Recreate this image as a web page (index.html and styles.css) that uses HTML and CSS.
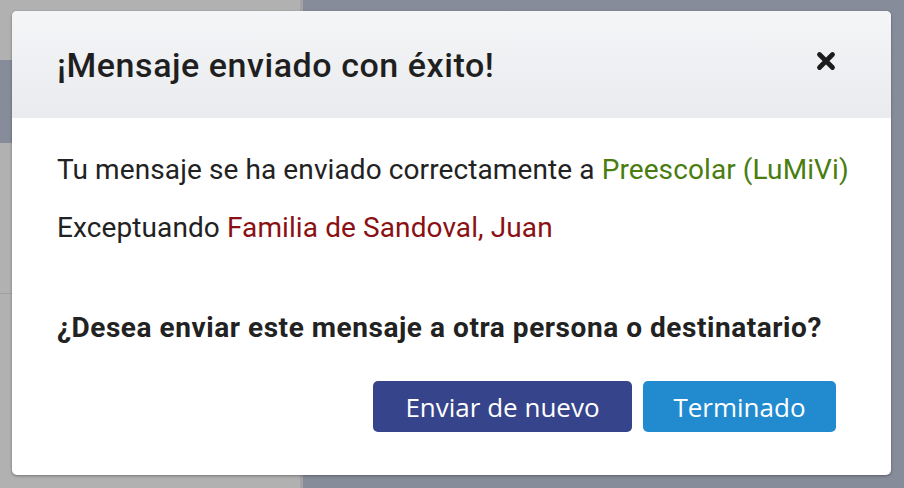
FILE: index.html
```html
<!DOCTYPE html>
<html lang="es">
<head>
<meta charset="utf-8">
<title>Mensaje enviado</title>
<link rel="stylesheet" href="styles.css">
</head>
<body>
<div class="app">
  <aside class="sidebar">
    <div class="side-top"></div>
    <div class="side-active"></div>
    <div class="side-rest"></div>
  </aside>
  <main class="main"></main>
</div>

<div class="modal">
  <header class="modal-header">
    <h1 class="modal-title">¡Mensaje enviado con éxito!</h1>
    <button class="close" aria-label="Cerrar">
      <svg width="20" height="20" viewBox="0 0 20 20"><path d="M3.5 3.5 L16.5 16.5 M16.5 3.5 L3.5 16.5" stroke="#1c1c1c" stroke-width="4.8" stroke-linecap="round"/></svg>
    </button>
  </header>
  <section class="modal-body">
    <p class="line">Tu mensaje se ha enviado correctamente a <span class="green">Preescolar (LuMiVi)</span></p>
    <p class="line">Exceptuando <span class="red">Familia de Sandoval, Juan</span></p>
    <p class="question">¿Desea enviar este mensaje a otra persona o destinatario?</p>
    <div class="actions">
      <button class="btn btn-primary">Enviar de nuevo</button>
      <button class="btn btn-info">Terminado</button>
    </div>
  </section>
</div>
</body>
</html>
```

FILE: styles.css
```css
html, body {
  margin: 0;
  padding: 0;
  width: 904px;
  height: 488px;
  overflow: hidden;
  font-family: Roboto, "Liberation Sans", sans-serif;
}

.app {
  display: flex;
  height: 488px;
}

.sidebar {
  width: 300px;
  background: #b1b1b1;
  border-right: 3px solid #a3a3a5;
  display: flex;
  flex-direction: column;
}

.side-top {
  height: 60px;
}

.side-active {
  height: 83px;
  background: #878c9a;
}

.side-rest {
  height: 150px;
  border-bottom: 1px solid #a0a0a0;
}

.main {
  flex: 1;
  background: #878c9b;
}

.modal {
  position: absolute;
  left: 12px;
  top: 11px;
  width: 879px;
  height: 464px;
  background: #fff;
  border-radius: 5px;
  box-shadow: 0 1px 3px rgba(0, 0, 0, 0.35);
  overflow: hidden;
}

.modal-header {
  height: 107px;
  padding: 0 55px 0 45px;
  display: flex;
  align-items: center;
  justify-content: space-between;
  background: linear-gradient(#f4f5f7, #eaebee);
}

.modal-title {
  margin: 0;
  font-size: 34px;
  font-weight: 500;
  letter-spacing: 0.55px;
  color: #1f1f21;
}

.close {
  border: 0;
  background: none;
  padding: 0;
  display: flex;
  margin-top: -7px;
}

.modal-body {
  padding: 35px 30px 0 45px;
}

.line {
  margin: 0 0 24px 0;
  font-size: 28px;
  letter-spacing: 0.1px;
  line-height: 34px;
  white-space: nowrap;
  color: #222;
}

.green {
  color: #4a7d10;
}

.red {
  color: #8a1013;
}

.question {
  margin: 66px 0 0 0;
  font-size: 28px;
  font-weight: 700;
  letter-spacing: 0.55px;
  line-height: 34px;
  white-space: nowrap;
  color: #222;
}

.actions {
  display: flex;
  justify-content: flex-end;
  gap: 11px;
  margin-top: 36px;
  padding-right: 25px;
}

.btn {
  border: 0;
  border-radius: 5px;
  height: 51px;
  color: #fff;
  font-family: "Open Sans", sans-serif;
  font-size: 26px;
  padding: 0;
}

.btn-primary {
  background: #36448c;
  width: 259px;
}

.btn-info {
  background: #228bd0;
  width: 193px;
}
```
